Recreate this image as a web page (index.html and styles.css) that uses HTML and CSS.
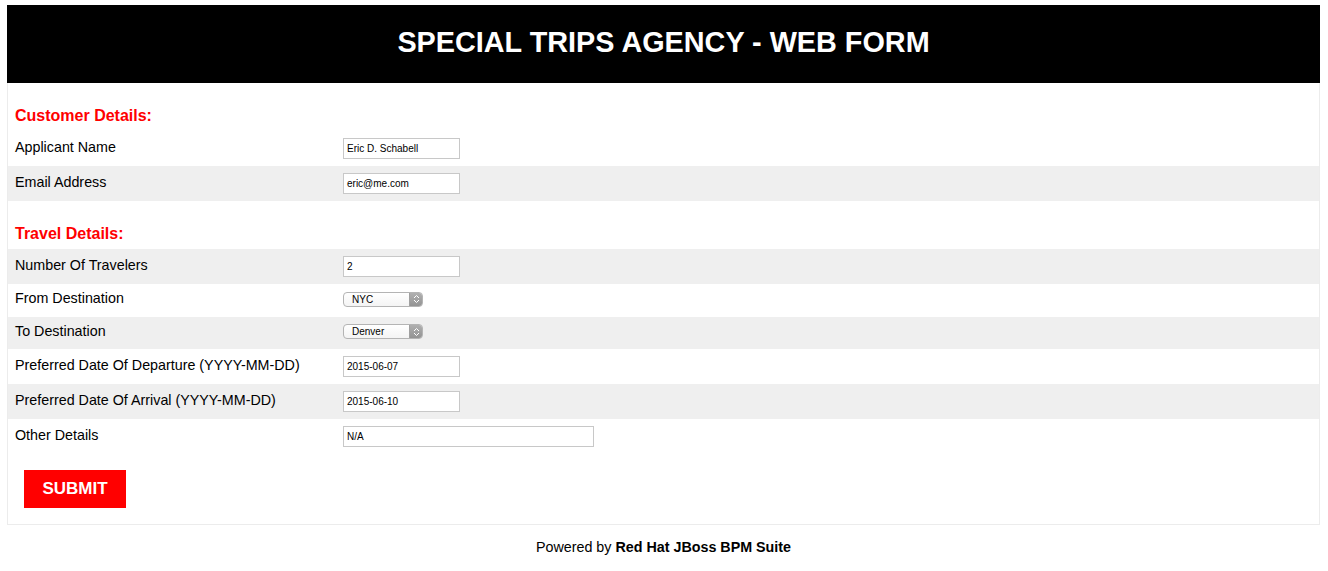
FILE: index.html
```html
<!DOCTYPE html>
<html>
<head>
<meta charset="utf-8">
<link rel="stylesheet" href="styles.css">
</head>
<body>
<div class="page">
  <div class="header"><h1>SPECIAL TRIPS AGENCY - WEB FORM</h1></div>
  <div class="form">
    <h2 class="section">Customer Details:</h2>
    <div class="row"><label>Applicant Name</label><span class="input">Eric D. Schabell</span></div>
    <div class="row alt"><label>Email Address</label><span class="input">eric@me.com</span></div>
    <h2 class="section">Travel Details:</h2>
    <div class="row alt"><label>Number Of Travelers</label><span class="input">2</span></div>
    <div class="row short"><label>From Destination</label><span class="select"><span class="sel-text">NYC</span><span class="stepper"><svg width="7" height="10" viewBox="0 0 7 10"><path d="M1 4 L3.5 1.5 L6 4 M1 6 L3.5 8.5 L6 6" fill="none" stroke="#fff" stroke-width="1"/></svg></span></span></div>
    <div class="row alt short"><label>To Destination</label><span class="select"><span class="sel-text">Denver</span><span class="stepper"><svg width="7" height="10" viewBox="0 0 7 10"><path d="M1 4 L3.5 1.5 L6 4 M1 6 L3.5 8.5 L6 6" fill="none" stroke="#fff" stroke-width="1"/></svg></span></span></div>
    <div class="row"><label>Preferred Date Of Departure (YYYY-MM-DD)</label><span class="input">2015-06-07</span></div>
    <div class="row alt"><label>Preferred Date Of Arrival (YYYY-MM-DD)</label><span class="input">2015-06-10</span></div>
    <div class="row"><label>Other Details</label><span class="input wide">N/A</span></div>
    <div class="actions"><button class="submit">SUBMIT</button></div>
  </div>
</div>
<p class="footer">Powered by <b>Red Hat JBoss BPM Suite</b></p>
</body>
</html>
```
FILE: styles.css
```css
html, body { margin: 0; padding: 0; background: #fff; }
body {
  font-family: "Liberation Sans", Arial, Helvetica, sans-serif;
  color: #000;
  padding: 5px 8px 0 7px;
}
.page {
  border: 1px solid #ececec;
  border-top: none;
}
.header {
  background: #000;
  height: 78px;
  display: flex;
  align-items: center;
  justify-content: center;
  margin: 0 -1px;
}
.header h1 {
  margin: 0;
  color: #fff;
  font-size: 28.8px;
  font-weight: bold;
  padding-bottom: 3px;
}
.form {
  padding: 0 0 16px 0;
}
.section {
  color: #f00;
  font-size: 16px;
  font-weight: bold;
  margin: 0;
  padding: 24px 7px 6px;
  line-height: 18px;
}
.row {
  display: flex;
  align-items: center;
  height: 35px;
  padding: 0 7px;
  font-size: 14.3px;
}
.row.short { height: 32.5px; }
.row.alt { background: #efefef; }
.row label {
  width: 328px;
  flex: none;
  position: relative;
  top: -2px;
}
.input {
  box-sizing: border-box;
  width: 117px;
  height: 21px;
  border: 1px solid #c8c8c8;
  background: #fff;
  font-size: 10px;
  line-height: 19px;
  padding: 0 3px;
}
.input.wide { width: 251px; }
.select {
  box-sizing: border-box;
  display: flex;
  width: 80px;
  height: 15px;
  border: 1px solid #b4b4b4;
  border-radius: 4px;
  background: linear-gradient(#fff, #f4f4f4);
  overflow: hidden;
  font-size: 10px;
  line-height: 13px;
  position: relative;
  top: -1px;
}
.sel-text {
  flex: 1;
  padding-left: 8px;
}
.stepper {
  width: 12px;
  background: linear-gradient(#b0b0b0, #939393);
  display: flex;
  align-items: center;
  justify-content: center;
  border-left: 1px solid #a0a0a0;
}
.actions {
  padding: 16px 16px 0;
}
.submit {
  background: #f00;
  color: #fff;
  border: none;
  font-family: "Liberation Sans", Arial, sans-serif;
  font-weight: bold;
  font-size: 17px;
  width: 102px;
  height: 38px;
  padding: 0;
  cursor: pointer;
}
.footer {
  text-align: center;
  font-size: 14.3px;
  margin: 14px 0 0;
}
```
